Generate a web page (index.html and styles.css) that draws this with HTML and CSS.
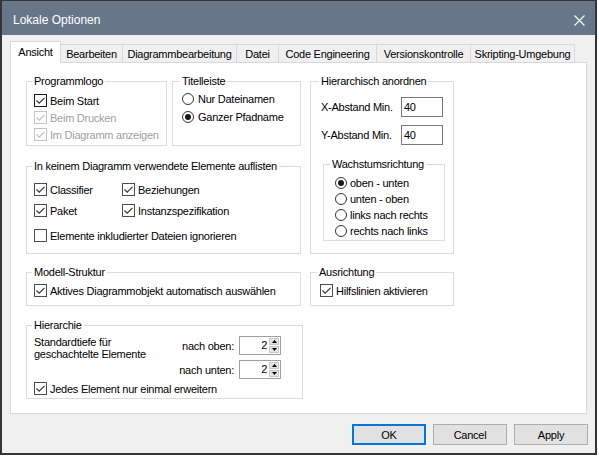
FILE: index.html
```html
<!DOCTYPE html>
<html lang="de">
<head>
<meta charset="utf-8">
<title>Lokale Optionen</title>
<link rel="stylesheet" href="styles.css">
</head>
<body>
<div class="window">
  <div class="titlebar">
    <span class="title">Lokale Optionen</span>
    <svg class="close" width="11" height="11" viewBox="0 0 11 11"><path d="M0.5 0.5 L10.5 10.5 M10.5 0.5 L0.5 10.5" stroke="#fff" stroke-width="1.1" fill="none"/></svg>
  </div>
  <div class="client">
    <div class="tabs">
      <div class="tab active">Ansicht</div>
      <div class="tab">Bearbeiten</div>
      <div class="tab">Diagrammbearbeitung</div>
      <div class="tab">Datei</div>
      <div class="tab">Code Engineering</div>
      <div class="tab">Versionskontrolle</div>
      <div class="tab">Skripting-Umgebung</div>
    </div>
    <div class="panel">
      <div class="col-left">
        <div class="row1">
          <div class="group g-logo">
            <div class="legend">Programmlogo</div>
            <div class="list">
              <div class="chk"><span class="box dark"><svg viewBox="0 0 11 11"><path d="M1.5 5.5 L4.2 8.2 L9.5 2.8" /></svg></span>Beim Start</div>
              <div class="chk disabled"><span class="box"><svg viewBox="0 0 11 11"><path d="M1.5 5.5 L4.2 8.2 L9.5 2.8" /></svg></span>Beim Drucken</div>
              <div class="chk disabled"><span class="box"><svg viewBox="0 0 11 11"><path d="M1.5 5.5 L4.2 8.2 L9.5 2.8" /></svg></span>Im Diagramm anzeigen</div>
            </div>
          </div>
          <div class="group g-title">
            <div class="legend">Titelleiste</div>
            <div class="list">
              <div class="rad"><span class="radio"></span>Nur Dateinamen</div>
              <div class="rad"><span class="radio on"></span>Ganzer Pfadname</div>
            </div>
          </div>
        </div>
        <div class="group g-unused">
          <div class="legend">In keinem Diagramm verwendete Elemente auflisten</div>
          <div class="grid2">
            <div class="chk"><span class="box"><svg viewBox="0 0 11 11"><path d="M1.5 5.5 L4.2 8.2 L9.5 2.8" /></svg></span>Classifier</div>
            <div class="chk"><span class="box"><svg viewBox="0 0 11 11"><path d="M1.5 5.5 L4.2 8.2 L9.5 2.8" /></svg></span>Beziehungen</div>
            <div class="chk"><span class="box"><svg viewBox="0 0 11 11"><path d="M1.5 5.5 L4.2 8.2 L9.5 2.8" /></svg></span>Paket</div>
            <div class="chk"><span class="box"><svg viewBox="0 0 11 11"><path d="M1.5 5.5 L4.2 8.2 L9.5 2.8" /></svg></span>Instanzspezifikation</div>
          </div>
          <div class="chk ignore"><span class="box"></span>Elemente inkludierter Dateien ignorieren</div>
        </div>
        <div class="group g-model">
          <div class="legend">Modell-Struktur</div>
          <div class="chk single"><span class="box"><svg viewBox="0 0 11 11"><path d="M1.5 5.5 L4.2 8.2 L9.5 2.8" /></svg></span>Aktives Diagrammobjekt automatisch auswählen</div>
        </div>
        <div class="group g-hier">
          <div class="legend">Hierarchie</div>
          <div class="hier-row">
            <div class="hier-text">Standardtiefe für<br>geschachtelte Elemente</div>
            <div class="spins">
              <span class="spin-label">nach oben:</span>
              <div class="spin"><span class="val">2</span><span class="arrows"><span class="arr"><svg width="5" height="3" viewBox="0 0 5 3"><path d="M2.5 0 L5 3 L0 3 Z"/></svg></span><span class="arr"><svg width="5" height="3" viewBox="0 0 5 3"><path d="M0 0 L5 0 L2.5 3 Z"/></svg></span></span></div>
              <span class="spin-label">nach unten:</span>
              <div class="spin"><span class="val">2</span><span class="arrows"><span class="arr"><svg width="5" height="3" viewBox="0 0 5 3"><path d="M2.5 0 L5 3 L0 3 Z"/></svg></span><span class="arr"><svg width="5" height="3" viewBox="0 0 5 3"><path d="M0 0 L5 0 L2.5 3 Z"/></svg></span></span></div>
            </div>
          </div>
          <div class="chk once"><span class="box"><svg viewBox="0 0 11 11"><path d="M1.5 5.5 L4.2 8.2 L9.5 2.8" /></svg></span>Jedes Element nur einmal erweitern</div>
        </div>
      </div>
      <div class="col-right">
        <div class="group g-arrange">
          <div class="legend">Hierarchisch anordnen</div>
          <div class="field f1"><span class="field-label">X-Abstand Min.</span><span class="num">40</span></div>
          <div class="field f2"><span class="field-label">Y-Abstand Min.</span><span class="num">40</span></div>
          <div class="group g-grow">
            <div class="legend">Wachstumsrichtung</div>
            <div class="list">
              <div class="rad"><span class="radio on"></span>oben - unten</div>
              <div class="rad"><span class="radio"></span>unten - oben</div>
              <div class="rad"><span class="radio"></span>links nach rechts</div>
              <div class="rad"><span class="radio"></span>rechts nach links</div>
            </div>
          </div>
        </div>
        <div class="group g-align">
          <div class="legend">Ausrichtung</div>
          <div class="chk single"><span class="box"><svg viewBox="0 0 11 11"><path d="M1.5 5.5 L4.2 8.2 L9.5 2.8" /></svg></span>Hilfslinien aktivieren</div>
        </div>
      </div>
    </div>
    <div class="buttons">
      <button class="btn default">OK</button>
      <button class="btn">Cancel</button>
      <button class="btn">Apply</button>
    </div>
  </div>
</div>
</body>
</html>
```
FILE: styles.css
```css
html, body {
  margin: 0;
  padding: 0;
  background: #ffffff;
}
body {
  font-family: "Liberation Sans", Arial, sans-serif;
  font-size: 11px;
  letter-spacing: -0.25px;
  color: #000;
}
.window {
  width: 597px;
  height: 455px;
  box-sizing: border-box;
  border-style: solid;
  border-color: #333538;
  border-width: 1px 2px 2px 2px;
  background: #f0f0f0;
  display: flex;
  flex-direction: column;
}
.titlebar {
  height: 34px;
  flex: none;
  background: #677789;
  display: flex;
  align-items: center;
  justify-content: space-between;
  box-sizing: border-box;
  padding: 4px 10px 0 11px;
}
.title {
  font-size: 12px;
  letter-spacing: 0;
  color: #ffffff;
}
.close {
  display: block;
}
.client {
  flex: 1;
  padding: 6px 8px 0 8px;
  display: flex;
  flex-direction: column;
}
.tabs {
  display: flex;
  align-items: flex-start;
  height: 21px;
}
.tab {
  box-sizing: border-box;
  height: 18px;
  margin-top: 3px;
  border: 1px solid #d9d9d9;
  border-bottom: none;
  background: #f0f0f0;
  display: flex;
  align-items: center;
  justify-content: center;
  margin-left: -1px;
  white-space: nowrap;
}
.tab.active {
  height: 22px;
  margin-top: 0;
  margin-left: 0;
  background: #ffffff;
  position: relative;
  z-index: 1;
  width: 51px;
  padding-bottom: 2px;
}
.tab:nth-child(2) { width: 63px; }
.tab:nth-child(3) { width: 115px; }
.tab:nth-child(4) { width: 43px; }
.tab:nth-child(5) { width: 99px; }
.tab:nth-child(6) { width: 95px; }
.tab:nth-child(7) { width: 105px; }
.panel {
  box-sizing: border-box;
  width: 577px;
  height: 352px;
  background: #ffffff;
  border: 1px solid #d9d9d9;
  padding: 18px 0 0 15px;
  display: flex;
  gap: 7px;
}
.col-left {
  width: 277px;
  display: flex;
  flex-direction: column;
}
.col-right {
  width: 144px;
  display: flex;
  flex-direction: column;
}
.row1 {
  display: flex;
  gap: 5px;
}
.group {
  box-sizing: border-box;
  border: 1px solid #dcdcdc;
}
.legend {
  width: fit-content;
  height: 14px;
  line-height: 14px;
  margin-top: -8px;
  padding: 0 2px;
  margin-left: -2px;
  background: #ffffff;
  white-space: nowrap;
}
.chk, .rad {
  display: flex;
  align-items: center;
  height: 17px;
  white-space: nowrap;
}
.box {
  flex: none;
  width: 13px;
  height: 13px;
  box-sizing: border-box;
  border: 1px solid #4d4d4d;
  background: #ffffff;
  margin-right: 3px;
}
.box.dark {
  border-color: #1a1a1a;
}
.box svg {
  display: block;
  width: 11px;
  height: 11px;
}
.box svg path {
  fill: none;
  stroke: #333333;
  stroke-width: 1.1;
}
.chk.disabled {
  color: #a0a0a0;
}
.chk.disabled .box {
  border-color: #c4c4c4;
}
.chk.disabled .box svg path {
  stroke: #c0c0c0;
}
.radio {
  flex: none;
  width: 12px;
  height: 12px;
  box-sizing: border-box;
  border: 1px solid #333333;
  border-radius: 50%;
  background: #ffffff;
  margin-right: 4px;
  display: flex;
  align-items: center;
  justify-content: center;
}
.radio.on::after {
  content: "";
  width: 6px;
  height: 6px;
  border-radius: 50%;
  background: #1a1a1a;
}

/* Programmlogo */
.g-logo {
  width: 141px;
  height: 65px;
  padding: 0 7px;
}
.g-logo .list {
  padding-top: 4px;
}
/* Titelleiste */
.g-title {
  width: 129px;
  height: 65px;
  padding: 0 0 0 9px;
}
.g-title .list {
  padding-top: 2px;
}
.g-title .rad {
  height: 18px;
}
/* In keinem Diagramm */
.g-unused {
  width: 275px;
  height: 88px;
  margin-top: 20px;
  padding-left: 7px;
}
.grid2 {
  display: grid;
  grid-template-columns: 88px auto;
  row-gap: 4px;
  margin-top: 8px;
}
.chk.ignore {
  margin-top: 8px;
}
/* Modell-Struktur */
.g-model {
  width: 275px;
  height: 34px;
  margin-top: 18px;
  padding-left: 7px;
}
.chk.single {
  margin-top: 3px;
}
/* Hierarchie */
.g-hier {
  width: 277px;
  height: 74px;
  margin-top: 19px;
  padding-left: 7px;
}
.hier-row {
  display: flex;
  margin-top: 4px;
}
.hier-text {
  line-height: 12px;
}
.spins {
  margin-left: auto;
  margin-right: 21px;
  display: grid;
  grid-template-columns: auto 42px;
  column-gap: 5px;
  row-gap: 5px;
  align-items: center;
}
.spin-label {
  text-align: right;
}
.spin {
  box-sizing: border-box;
  width: 42px;
  height: 19px;
  border: 1px solid #a0a0a0;
  background: #ffffff;
  display: flex;
}
.val {
  flex: 1;
  text-align: right;
  line-height: 17px;
  padding-right: 2px;
}
.arrows {
  width: 10px;
  display: flex;
  flex-direction: column;
  gap: 1px;
  margin: 1px 1px 1px 0;
}
.arr {
  flex: 1;
  background: #e3e3e3;
  border: 1px solid #c8c8c8;
  box-sizing: border-box;
  display: flex;
  align-items: center;
  justify-content: center;
}
.arr svg {
  display: block;
}
.arr svg path {
  fill: #000000;
}
.chk.once {
  margin-top: 1px;
}
/* Hierarchisch anordnen */
.g-arrange {
  width: 144px;
  height: 173px;
  padding-left: 10px;
}
.field {
  display: flex;
  align-items: center;
}
.field.f1 {
  margin-top: 9px;
}
.field.f2 {
  margin-top: 8px;
}
.field-label {
  width: 80px;
  white-space: nowrap;
}
.num {
  box-sizing: border-box;
  width: 42px;
  height: 20px;
  border: 1px solid #7a7a7a;
  background: #ffffff;
  line-height: 18px;
  padding-left: 2px;
}
.g-grow {
  width: 122px;
  height: 77px;
  margin-top: 19px;
  margin-left: 2px;
  padding-left: 11px;
}
.g-grow .legend {
  margin-left: -5px;
}
.g-grow .list {
  margin-top: 4px;
}
.g-grow .rad {
  height: 16px;
}
.g-grow .radio {
  margin-right: 3px;
}
/* Ausrichtung */
.g-align {
  width: 144px;
  height: 34px;
  margin-top: 18px;
  padding-left: 9px;
}
.g-align .legend {
  margin-left: -3px;
}
/* Buttons */
.buttons {
  display: flex;
  justify-content: flex-end;
  gap: 7px;
  margin-top: 10px;
  margin-right: -1px;
}
.btn {
  box-sizing: border-box;
  width: 74px;
  height: 21px;
  border: 1px solid #adadad;
  background: #e1e1e1;
  font-family: "Liberation Sans", Arial, sans-serif;
  font-size: 11px;
  letter-spacing: -0.25px;
  color: #000;
  padding: 0;
  margin: 0;
}
.btn.default {
  border: 2px solid #0078d7;
}
```
